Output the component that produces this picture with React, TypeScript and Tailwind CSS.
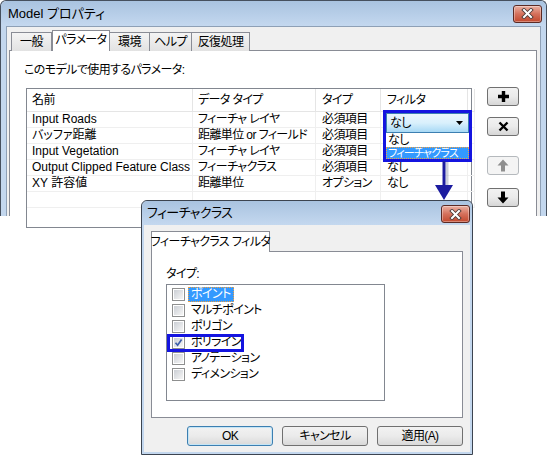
import React from "react";

// Two Win7 style dialogs: the model properties window (cut off) with the
// feature class filter dialog laid over it.

function CloseBtn() {
  return (
    <div className="w-[29px] h-[18px] rounded-[3px] border border-[#5b2a24] bg-linear-to-b from-[#eab0a2] via-[#d4705b] to-[#c2472c] flex items-center justify-center shadow-[inset_0_0_0_1px_rgba(255,255,255,0.35)]">
      <svg width="13" height="11" viewBox="0 0 13 11">
        <path d="M3 2 L10 9 M10 2 L3 9" stroke="#4a3a38" strokeWidth="3.8" strokeLinecap="square" />
        <path d="M3 2 L10 9 M10 2 L3 9" stroke="#ffffff" strokeWidth="2" strokeLinecap="square" />
      </svg>
    </div>
  );
}

function ToolBtn({ children, disabled }: { children: React.ReactNode; disabled?: boolean }) {
  return (
    <div
      className={
        disabled
          ? "w-[32px] h-[19px] rounded-[3px] border border-[#b5b9bd] bg-[#f4f4f4] flex items-center justify-center"
          : "w-[32px] h-[19px] rounded-[3px] border border-[#707070] bg-linear-to-b from-[#f2f2f2] via-[#ebebeb] to-[#d6d6d6] flex items-center justify-center"
      }
    >
      {children}
    </div>
  );
}

function Check({ checked }: { checked?: boolean }) {
  return (
    <span className="w-[13px] h-[13px] shrink-0 border border-[#8e8f8f] bg-white p-px flex">
      <span className="flex-1 bg-linear-to-br from-[#cbcfd5] to-[#f6f6f6] flex items-center justify-center">
        {checked && (
          <svg width="9" height="9" viewBox="0 0 9 9">
            <path d="M1.5 4.8 L3.6 7.2 L7.6 1.4" stroke="#3d5ea8" strokeWidth="1.7" fill="none" />
          </svg>
        )}
      </span>
    </span>
  );
}

function DlgButton({ label, isDefault }: { label: string; isDefault?: boolean }) {
  return (
    <div
      className={
        isDefault
          ? "w-[87px] h-[20px] rounded-[3px] border border-[#3c7fb1] bg-linear-to-b from-[#f2f2f2] via-[#ebebeb] to-[#d9d9d9] flex items-center justify-center shadow-[inset_0_0_0_1px_#c4e5f6]"
          : "w-[87px] h-[20px] rounded-[3px] border border-[#707070] bg-linear-to-b from-[#f2f2f2] via-[#ebebeb] to-[#d9d9d9] flex items-center justify-center"
      }
    >
      {label}
    </div>
  );
}

// filter cells of the first three rows sit under the open drop-down
const rows = [
  ["Input Roads", "フィーチャ レイヤ", "必須項目", ""],
  ["バッファ距離", "距離単位 or フィールド", "必須項目", ""],
  ["Input Vegetation", "フィーチャ レイヤ", "必須項目", ""],
  ["Output Clipped Feature Class", "フィーチャクラス", "必須項目", "なし"],
  ["XY 許容値", "距離単位", "オプション", "なし"],
  ["", "", "", ""],
];

const filterTypes = [
  { name: "ポイント", checked: false, selected: true },
  { name: "マルチポイント", checked: false },
  { name: "ポリゴン", checked: false },
  { name: "ポリライン", checked: true },
  { name: "アノテーション", checked: false },
  { name: "ディメンション", checked: false },
];

export default function App() {
  return (
    <div className="relative w-[547px] h-[455px] bg-white overflow-hidden text-[12px] tracking-[-0.6px] text-black font-['Liberation_Sans','Noto_Sans_CJK_JP',sans-serif] [font-feature-settings:'palt']">
      {/* Main window */}
      <div className="h-[216px] flex flex-col border border-[#46505e] border-b-0 rounded-t-[6px] bg-[#c3d7ee]">
        <div className="h-[25px] shrink-0 flex items-center justify-between pl-[7px] pr-[4px] rounded-t-[6px] bg-linear-to-b from-[#a9c3e0] to-[#c4d8ef]">
          <span className="text-[13px] tracking-normal">Model プロパティ</span>
          <CloseBtn />
        </div>
        <div className="flex-1 min-h-0 mx-[5px] border border-[#8ea0b6] border-b-0 bg-[#f0f0f0] pl-[2px] pr-[3px] pt-[3px] flex flex-col">
          <div className="h-[21px] ml-[2px] flex items-end relative z-10 -mb-px">
            <div className="w-[41px] h-[19px] border border-[#898c95] border-b-0 bg-linear-to-b from-[#f4f4f4] to-[#e2e2e2] flex items-center justify-center">一般</div>
            <div className="w-[58px] h-[21px] border border-[#898c95] border-b-0 bg-white flex items-center justify-center pb-[2px]">パラメータ</div>
            <div className="w-[40px] h-[19px] border border-[#898c95] border-b-0 border-l-0 bg-linear-to-b from-[#f4f4f4] to-[#e2e2e2] flex items-center justify-center">環境</div>
            <div className="w-[42px] h-[19px] border border-[#898c95] border-b-0 border-l-0 bg-linear-to-b from-[#f4f4f4] to-[#e2e2e2] flex items-center justify-center">ヘルプ</div>
            <div className="w-[58px] h-[19px] border border-[#898c95] border-b-0 border-l-0 bg-linear-to-b from-[#f4f4f4] to-[#e2e2e2] flex items-center justify-center">反復処理</div>
          </div>
          <div className="flex-1 min-h-0 bg-white border border-[#898c95] border-b-0 pl-[14px] pt-[12px]">
            <div className="leading-[14px]">このモデルで使用するパラメータ:</div>
            <div className="flex mt-[11px] ml-[2px]">
              <div className="w-[446px] h-[140px] border border-[#828790] bg-white">
                <div className="grid grid-cols-[166px_123px_65px_87px_4px]">
                  {["名前", "データ タイプ", "タイプ", "フィルタ", ""].map((h, i) => (
                    <div
                      key={i}
                      className={
                        i < 2
                          ? "h-[23px] border-r border-b border-[#e5e5e5] pl-[5px] leading-[22px]"
                          : "h-[23px] border-r border-b border-[#e5e5e5] pl-[6px] leading-[22px]"
                      }
                    >
                      {h}
                    </div>
                  ))}
                  {rows.map((r, ri) =>
                    [...r, ""].map((c, ci) => (
                      <div
                        key={ri + "-" + ci}
                        className={
                          ci === 0
                            ? "h-[16px] border-r border-b border-[#efefef] pl-[5px] leading-[15px] whitespace-nowrap overflow-hidden tracking-normal"
                            : ci === 1
                            ? "h-[16px] border-r border-b border-[#efefef] pl-[5px] leading-[15px] whitespace-nowrap overflow-hidden"
                            : "h-[16px] border-r border-b border-[#efefef] pl-[6px] leading-[15px] whitespace-nowrap overflow-hidden"
                        }
                      >
                        {c}
                      </div>
                    ))
                  )}
                </div>
              </div>
              <div className="ml-[15px] -mt-px flex flex-col">
                <ToolBtn>
                  <svg width="13" height="13" viewBox="0 0 13 13">
                    <path d="M6.5 1 V12 M1 6.5 H12" stroke="#000" strokeWidth="3.4" />
                  </svg>
                </ToolBtn>
                <div className="mt-[11px]">
                  <ToolBtn>
                    <svg width="11" height="11" viewBox="0 0 11 11">
                      <path d="M1.5 1.5 L9.5 9.5 M9.5 1.5 L1.5 9.5" stroke="#000" strokeWidth="2.4" />
                    </svg>
                  </ToolBtn>
                </div>
                <div className="mt-[20px]">
                  <ToolBtn disabled>
                    <svg width="12" height="13" viewBox="0 0 12 13">
                      <path d="M6 0.5 L11.5 6.5 H8 V12.5 H4 V6.5 H0.5 Z" fill="#8f8f8f" />
                    </svg>
                  </ToolBtn>
                </div>
                <div className="mt-[13px]">
                  <ToolBtn>
                    <svg width="12" height="13" viewBox="0 0 12 13">
                      <path d="M6 12.5 L11.5 6.5 H8 V0.5 H4 V6.5 H0.5 Z" fill="#000" />
                    </svg>
                  </ToolBtn>
                </div>
              </div>
            </div>
          </div>
        </div>
      </div>

      {/* Open filter drop-down, outlined in blue */}
      <div className="absolute left-[383px] top-[110px] w-[89px] h-[52px] border-[3px] border-[#1414e0] bg-white flex flex-col">
        <div className="h-[20px] border border-[#3c7fb1] bg-linear-to-b from-[#eaf6fd] via-[#d9f0fc] to-[#a7d9f5] flex items-center justify-between pl-[3px] pr-[5px]">
          <span className="leading-[14px]">なし</span>
          <svg width="7" height="4" viewBox="0 0 7 4">
            <path d="M0 0 H7 L3.5 4 Z" fill="#000" />
          </svg>
        </div>
        <div className="h-[14px] leading-[14px] pl-[2px]">なし</div>
        <div className="h-[12px] leading-[10px] text-[11px] tracking-[-0.8px] bg-[#3399ff] text-white border border-dotted border-[#f0a040] pl-px whitespace-nowrap overflow-hidden">フィーチャクラス</div>
      </div>

      {/* Feature class dialog */}
      <div className="absolute left-[141px] top-[200px] w-[332px] h-[255px] border border-[#3c4450] rounded-t-[6px] bg-[#c3d7ee] px-[2px] pb-[2px] flex flex-col">
        <div className="h-[24px] shrink-0 flex items-start justify-between pl-[5px] pr-[2px] pt-[4px] -mx-[2px] rounded-t-[6px] bg-linear-to-b from-[#a9c3e0] to-[#c4d8ef]">
          <span className="text-[13px] leading-[16px]">フィーチャクラス</span>
          <CloseBtn />
        </div>
        <div className="flex-1 bg-[#f0f0f0] pl-[7px] pr-[7px] pt-[6px] flex flex-col">
          <div className="w-[119px] h-[21px] border border-[#898c95] border-b-0 bg-white flex items-center justify-center relative z-10 -mb-px pb-[1px] whitespace-nowrap">
            フィーチャクラス フィルタ
          </div>
          <div className="h-[167px] bg-white border border-[#898c95] pl-[14px] pt-[15px]">
            <div className="leading-[14px]">タイプ:</div>
            <div className="mt-[3px] w-[219px] h-[117px] border border-[#828790] bg-white pt-px pl-[5px]">
              {filterTypes.map((t) => (
                <div key={t.name} className="h-[16px] flex items-center">
                  <Check checked={t.checked} />
                  <span
                    className={
                      t.selected
                        ? "ml-[3px] h-[15px] px-[2px] leading-[13px] bg-[#3399ff] text-white border border-dotted border-[#f0a040] whitespace-nowrap"
                        : "ml-[3px] h-[15px] px-[3px] leading-[15px] whitespace-nowrap"
                    }
                  >
                    {t.name}
                  </span>
                </div>
              ))}
            </div>
          </div>
          <div className="mt-[8px] pl-[36px] flex gap-[9px]">
            <DlgButton label="OK" isDefault />
            <DlgButton label="キャンセル" />
            <DlgButton label="適用(A)" />
          </div>
        </div>
      </div>

      {/* Highlight around the checked polyline entry */}
      <div className="absolute left-[167px] top-[334px] w-[77px] h-[18px] border-[3px] border-[#1414e0]" />

      {/* Arrow from the drop-down to the dialog */}
      <svg className="absolute left-[433px] top-[161px]" width="24" height="42" viewBox="0 0 24 42">
        <path d="M12.5 0 V27" stroke="#9aa0b8" strokeWidth="3" opacity="0.5" transform="translate(1.5 1)" />
        <path d="M11 0 V26" stroke="#1c1ca0" strokeWidth="3" />
        <path d="M2 24 H20 L11 39 Z" fill="#1c1ca0" />
      </svg>
    </div>
  );
}
